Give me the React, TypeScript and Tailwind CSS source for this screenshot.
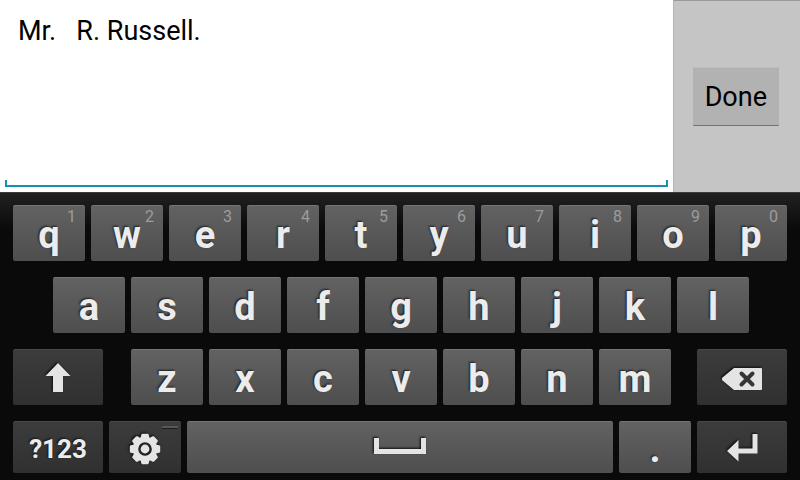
import React, { useState } from 'react';
import clsx from 'clsx';

const topRow = ['q', 'w', 'e', 'r', 't', 'y', 'u', 'i', 'o', 'p'];
const homeRow = ['a', 's', 'd', 'f', 'g', 'h', 'j', 'k', 'l'];
const bottomRow = ['z', 'x', 'c', 'v', 'b', 'n', 'm'];

type KeyProps = {
  label: string;
  onPress?: () => void;
  dark?: boolean;
  className?: string;
  children: React.ReactNode;
};

const Key: React.FC<KeyProps> = ({ label, onPress, dark, className, children }) => (
  <button
    type="button"
    aria-label={label}
    onClick={onPress}
    className={clsx(
      'relative flex min-w-0 items-center justify-center rounded-[2px] border-t bg-linear-to-b text-[#ececec]',
      dark
        ? 'border-[#484848] from-[#3c3c3c] to-[#303030]'
        : 'border-[#757575] from-[#626262] to-[#4e4e4e]',
      className
    )}
  >
    {children}
  </button>
);

type LetterKeyProps = {
  char: string;
  hint?: string;
  onType: (char: string) => void;
};

const LetterKey: React.FC<LetterKeyProps> = ({ char, hint, onType }) => (
  <Key label={char} onPress={() => onType(char)} className="h-14 flex-[72_1_0%]">
    <span className="pt-[2px] text-[38px] leading-[46px] font-bold text-shadow-[-1px_-1px_2px_#1c1c1c]">
      {char}
    </span>
    {hint && (
      <span className="absolute top-px right-[9px] text-[16px] leading-[20px] text-[#9c9c9c]">
        {hint}
      </span>
    )}
  </Key>
);

const iconClass = 'fill-[#e4e4e4] drop-shadow-[-1px_-1px_1px_#0c0c0c]';

const ShiftIcon = () => (
  <svg width="26" height="30" viewBox="0 0 26 30" className={iconClass}>
    <path d="M13 0 25.500 13H18V29H8V13H.5Z" />
  </svg>
);

const DeleteIcon = () => (
  <svg width="42" height="24" viewBox="0 0 42 24" className={iconClass}>
    <path d="M13 1H40Q41 1 41 2V22Q41 23 40 23H13L1.500 13.500Q0 12 1.500 10.500Z" />
    <path d="M20.500 6.500 31.500 17.500M31.500 6.500 20.500 17.500" className="stroke-[#363636]" strokeWidth="4" strokeLinecap="round" />
  </svg>
);

const SettingsIcon = () => (
  <svg width="32" height="32" viewBox="-16 -16 32 32" className={iconClass}>
    <circle r="9.500" fill="none" className="fill-none stroke-[#e4e4e4]" strokeWidth="5.400" />
    {[0, 45, 90, 135, 180, 225, 270, 315].map(angle => (
      <path
        key={angle}
        transform={`rotate(${angle})`}
        d="M-4.600-10.500-3.700-14.200Q-3.400-15.200-2.400-15.200H2.400Q3.400-15.200 3.700-14.200L4.600-10.500Z"
      />
    ))}
    <circle r="4.400" />
  </svg>
);

const SpaceIcon = () => (
  <svg width="52" height="16" viewBox="0 0 52 16" className={iconClass}>
    <path d="M0 0H5V11H47V0H52V16H0Z" />
  </svg>
);

const EnterIcon = () => (
  <svg width="31" height="28" viewBox="0 0 31 28" className={iconClass}>
    <path d="M25.500 0H30.500V19.500H11.500V27.500L0 17 11.500 6V14.500H25.500Z" />
  </svg>
);

export default function App() {
  const [text, setText] = useState('Mr.   R. Russell.');
  const [shift, setShift] = useState(false);

  const type = (char: string) => {
    setText(text + (shift ? char.toUpperCase() : char));
    setShift(false);
  };

  return (
    <main className="flex min-h-screen flex-col bg-white font-[Roboto,sans-serif]">
      <section className="flex flex-1">
        <div className="flex flex-1 flex-col px-[5px] pb-[5px]">
          <textarea
            aria-label="Text"
            value={text}
            onChange={e => setText(e.target.value)}
            className="block w-full flex-1 resize-none px-[13px] pt-[15px] text-[27px] leading-[32px] text-black outline-none"
          />
          <div className="h-[7px] border-x-2 border-b-2 border-[#1b8fb0]" />
        </div>
        <div className="flex items-center border-t border-l border-t-[#999] border-l-[#b4b4b4] bg-[#c5c5c5] pr-[21px] pl-[19px]">
          <button
            type="button"
            className="h-[59px] rounded-[1px] border-t border-b border-t-[#bdbdbd] border-b-[#747474] bg-[#b2b2b2] px-3 text-[27px] leading-[32px] text-black"
          >
            Done
          </button>
        </div>
      </section>

      {/* Keyboard */}
      <section className="flex flex-col gap-4 border-t border-[#3a3a3a] bg-[#0a0a0a] bg-[linear-gradient(#212121,#0a0a0a_36px)] px-[13px] pt-3 pb-[7px]">
        <div className="flex gap-[6px]">
          {topRow.map((char, i) => (
            <LetterKey key={char} char={char} hint={String((i + 1) % 10)} onType={type} />
          ))}
        </div>

        <div className="flex gap-[6px]">
          <div className="flex-[34_1_0%]" />
          {homeRow.map(char => (
            <LetterKey key={char} char={char} onType={type} />
          ))}
          <div className="flex-[32_1_0%]" />
        </div>

        <div className="flex gap-[6px]">
          <Key label="Shift" dark onPress={() => setShift(!shift)} className="flex-[90_1_0%]">
            <ShiftIcon />
          </Key>
          <div className="flex-[16_1_0%]" />
          {bottomRow.map(char => (
            <LetterKey key={char} char={char} onType={type} />
          ))}
          <div className="flex-[14_1_0%]" />
          <Key label="Delete" dark onPress={() => setText(text.slice(0, -1))} className="flex-[90_1_0%] pt-[2px]">
            <DeleteIcon />
          </Key>
        </div>

        <div className="flex h-[52px] gap-[6px]">
          <Key label="?123" dark className="flex-[90_1_0%]">
            <span className="pt-[2px] text-[26px] leading-[32px] font-bold text-shadow-[-1px_-1px_2px_#141414]">
              ?123
            </span>
          </Key>
          <Key label="Settings" dark className="flex-[72_1_0%] pt-[2px]">
            <SettingsIcon />
            <span className="absolute top-1 right-[3px] h-[3px] w-4 rounded-[1px] border-b border-[#1c1c1c] bg-[#585858]" />
          </Key>
          <Key label="Space" onPress={() => type(' ')} className="flex-[426_1_0%] pb-1">
            <SpaceIcon />
          </Key>
          <Key label="Period" onPress={() => type('.')} className="flex-[72_1_0%]">
            <span className="pt-[2px] text-[38px] leading-[46px] font-bold text-shadow-[-1px_-1px_2px_#1c1c1c]">
              .
            </span>
          </Key>
          <Key label="Enter" dark onPress={() => type('\n')} className="flex-[90_1_0%]">
            <EnterIcon />
          </Key>
        </div>
      </section>
    </main>
  );
}
